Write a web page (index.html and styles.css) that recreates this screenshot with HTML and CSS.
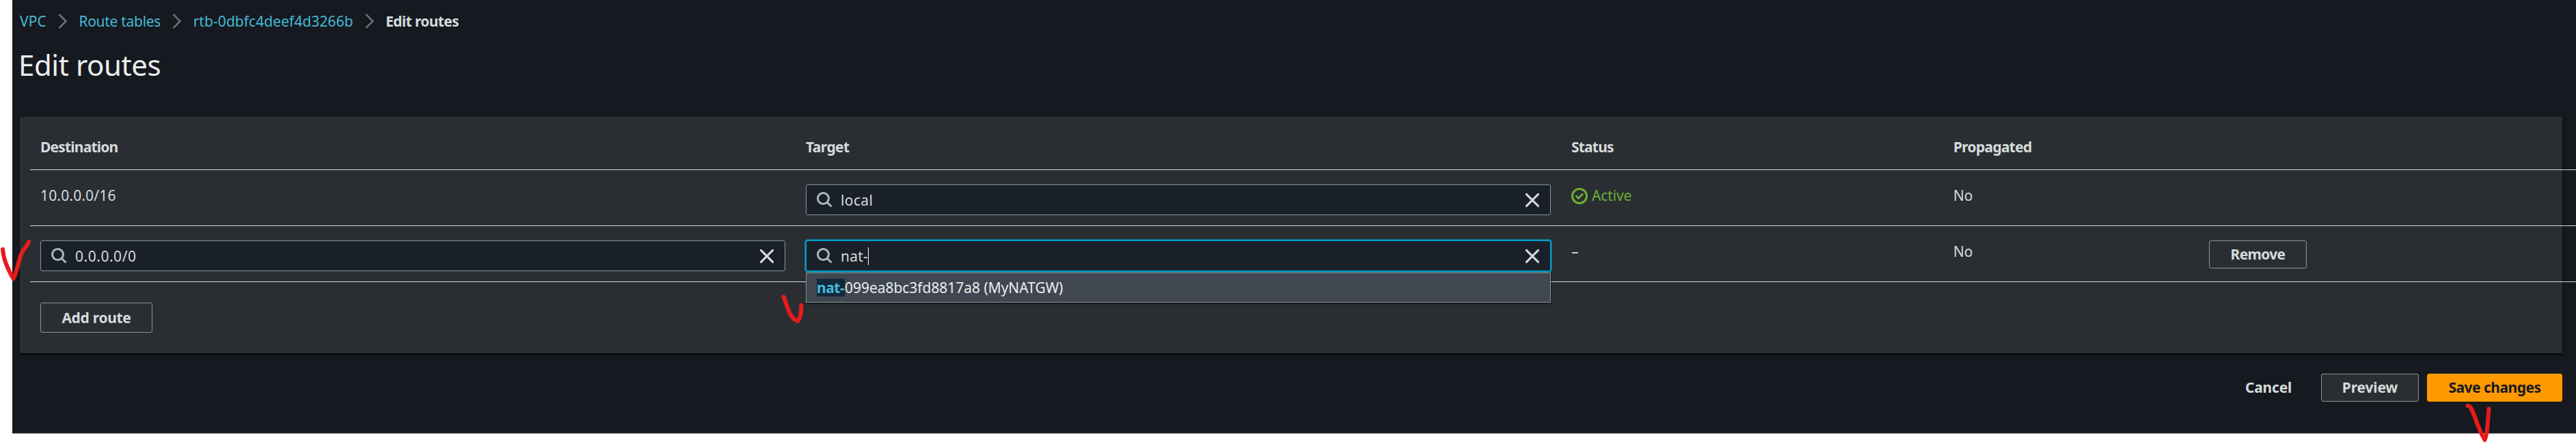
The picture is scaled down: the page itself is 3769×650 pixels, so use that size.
FILE: index.html
```
<!DOCTYPE html>
<html lang="en">
<head>
<meta charset="utf-8">
<title>Edit routes</title>
<link rel="stylesheet" href="styles.css">
</head>
<body>
<svg class="defs" width="0" height="0">
  <symbol id="search" viewBox="0 0 23 23"><circle cx="9.5" cy="9.5" r="8" fill="none" stroke="currentColor" stroke-width="3"/><path d="M15 15L21.5 21.5" fill="none" stroke="currentColor" stroke-width="3"/></symbol>
  <symbol id="close" viewBox="0 0 24 24"><path d="M3.4 3.4L20.6 20.6M20.6 3.4L3.4 20.6" fill="none" stroke="currentColor" stroke-width="3" stroke-linecap="round"/></symbol>
  <symbol id="ok" viewBox="0 0 24 24"><circle cx="12" cy="12" r="10.5" fill="none" stroke="currentColor" stroke-width="3"/><path d="M6.5 11.5L10.5 15.2L17 8.7" fill="none" stroke="currentColor" stroke-width="3"/></symbol>
  <symbol id="chevron" viewBox="0 0 14 22"><path d="M1.5 1L11.5 11L1.5 21" fill="none" stroke="currentColor" stroke-width="2.6"/></symbol>
</svg>
<main class="app">
  <nav class="crumbs">
    <a class="t-vpc">VPC</a><svg class="chev"><use href="#chevron"/></svg>
    <a class="t-tables">Route tables</a><svg class="chev"><use href="#chevron"/></svg>
    <a class="t-rtb">rtb-0dbfc4deef4d3266b</a><svg class="chev"><use href="#chevron"/></svg>
    <b class="t-edit">Edit routes</b>
  </nav>
  <h1 class="title"><span>Edit routes</span></h1>
  <section class="panel">
    <div class="row head">
      <div><span class="t-dest">Destination</span></div><div><span class="t-target">Target</span></div><div><span class="t-status">Status</span></div><div><span class="t-prop">Propagated</span></div><div></div>
    </div>
    <div class="row">
      <div class="plain"><span class="t-cidr">10.0.0.0/16</span></div>
      <div><div class="field"><svg class="search"><use href="#search"/></svg><span class="t-local">local</span><svg class="close"><use href="#close"/></svg></div></div>
      <div class="plain active"><svg class="ok"><use href="#ok"/></svg><span class="t-active">Active</span></div>
      <div class="plain"><span class="t-no">No</span></div>
      <div></div>
    </div>
    <div class="row">
      <div><div class="field"><svg class="search"><use href="#search"/></svg><span class="t-any">0.0.0.0/0</span><svg class="close"><use href="#close"/></svg></div></div>
      <div class="combo"><div class="field focus"><svg class="search"><use href="#search"/></svg><span class="t-nat">nat-</span><i class="caret"></i><svg class="close"><use href="#close"/></svg></div>
        <div class="menu"><mark>nat-</mark><span class="t-opt">099ea8bc3fd8817a8 (MyNATGW)</span></div></div>
      <div class="plain"><span class="t-dash">–</span></div>
      <div class="plain"><span class="t-no">No</span></div>
      <div><button class="btn remove"><span class="t-remove">Remove</span></button></div>
    </div>
    <button class="btn add"><span class="t-add">Add route</span></button>
  </section>
  <footer class="actions">
    <button class="btn link"><span class="t-cancel">Cancel</span></button>
    <button class="btn preview"><span class="t-preview">Preview</span></button>
    <button class="btn primary"><span class="t-save">Save changes</span></button>
  </footer>
</main>
<svg class="ink" viewBox="0 0 3769 650">
  <path d="M4 365C5 381 13 397 19.5 408C26 397 28 371 36 364C39 360 41 357 42 354"/>
  <path d="M1146.5 434.5C1152 447 1154 465 1167 470C1172 465 1172.500 456 1172.500 447"/>
  <path d="M3610.500 594C3619 594 3621 620 3635.500 644C3640 635 3640 612 3641.500 598.500"/>
</svg>
</body>
</html>
```
FILE: styles.css
```
* { box-sizing: border-box; }
body { margin: 0; background: #fff; font: 21px/30px "Noto Sans", sans-serif; color: #d5dbdb; overflow: hidden; }
.defs { position: absolute; }
.app { margin-left: 18px; height: 635px; background: #16191f; padding: 0 20px 0 11px; border-bottom: 1px solid #85878a; }
span, a, b, mark { display: block; white-space: nowrap; }
.crumbs { display: flex; align-items: center; height: 62px; color: #44b9d6; }
.chev { width: 14px; height: 22px; margin: 0 16.5px 0 17px; color: #687078; flex: none; }
.crumbs b { color: #d5dbdb; }
.title { margin: 0 0 0 -2px; height: 109px; padding-top: 3px; font-size: 42px; line-height: 60px; font-weight: 400; color: #eaeded; letter-spacing: -.43px; }
.panel { height: 346px; background: #2a2e33; padding-left: 15px; box-shadow: 0 2px 2px rgba(0,0,0,.45), 2px 2px 4px rgba(0,0,0,.35); }
.row { display: grid; grid-template-columns: 1120px 1120px 560px 373px 552px; width: 3725px; height: 82px; border-bottom: 1px solid #d5dbdb; }
.row > div { padding: 21px 15px 0; }
.row.head { height: 78px; font-weight: 700; }
.row.head > div { padding-top: 29px; }
.row > .plain { padding-top: 22px; }
.active { display: flex; gap: 6px; color: #6aaf35; }
.ok { width: 24px; height: 24px; margin-top: 4px; }
.field { display: flex; align-items: center; height: 45px; border: 1px solid #879596; border-radius: 3px; background: #1a2029; padding: 0 14px 0 15px; }
.search { width: 23px; height: 23px; margin-right: 12px; color: #aab7b8; flex: none; }
.close { width: 24px; height: 24px; margin-left: auto; color: #d5dbdb; flex: none; }
.focus { border-color: #00a1c9; box-shadow: 0 0 0 1px #00a1c9, 0 0 0 2px #17667f; }
.caret { width: 1px; height: 26px; background: #fff; }
.combo { position: relative; }
.menu { position: absolute; left: 15px; right: 15px; top: 68px; height: 44px; display: flex; align-items: center; padding-left: 15px; background: #414750; border: 1px solid #879596; box-shadow: 1px 2px 2px rgba(0,0,0,.5); color: #eaeded; z-index: 1; }
.row .menu { padding-top: 0; }
mark { width: 41px; background: #12293b; color: #44b9d6; font-weight: 700; line-height: 26px; letter-spacing: -.45px; }
.btn { display: flex; align-items: center; justify-content: center; height: 41px; padding: 0 0 2px; border: 1px solid #879596; border-radius: 3px; background: #2a2e33; color: #d5dbdb; font: 700 21px/30px "Noto Sans", sans-serif; }
.remove, .preview { width: 143px; }
.add { width: 164px; height: 44px; margin: 30px 0 0 15px; padding: 0; }
.actions { display: flex; justify-content: flex-end; padding-top: 30px; }
.link { background: none; border-color: transparent; width: 132px; margin-right: 11px; }
.primary { width: 198px; margin-left: 12px; background: #ff9900; border-color: #ff9900; color: #16191f; }
.t-vpc { letter-spacing: .1px; }
.t-tables { letter-spacing: -.29px; }
.t-rtb { letter-spacing: .06px; }
.t-edit { letter-spacing: -.63px; }
.t-dest, .t-status { letter-spacing: -.81px; }
.t-target { letter-spacing: -.6px; }
.t-prop { letter-spacing: -.72px; margin-left: -1px; }
.t-cidr { letter-spacing: .17px; }
.t-any { letter-spacing: .53px; }
.t-local { letter-spacing: .38px; }
.t-nat { letter-spacing: .22px; }
.t-opt { letter-spacing: -.04px; }
.t-active { letter-spacing: -.13px; }
.t-no { letter-spacing: -.26px; margin-left: -1px; }
.t-remove { letter-spacing: -.7px; }
.t-add { letter-spacing: -.3px; }
.t-cancel { letter-spacing: -.22px; }
.t-preview { letter-spacing: -.17px; }
.t-save { letter-spacing: -.51px; }
.ink { position: absolute; left: 0; top: 0; width: 3769px; height: 650px; fill: none; stroke: #e81b1b; stroke-width: 6; stroke-linecap: round; stroke-linejoin: round; pointer-events: none; }
```
